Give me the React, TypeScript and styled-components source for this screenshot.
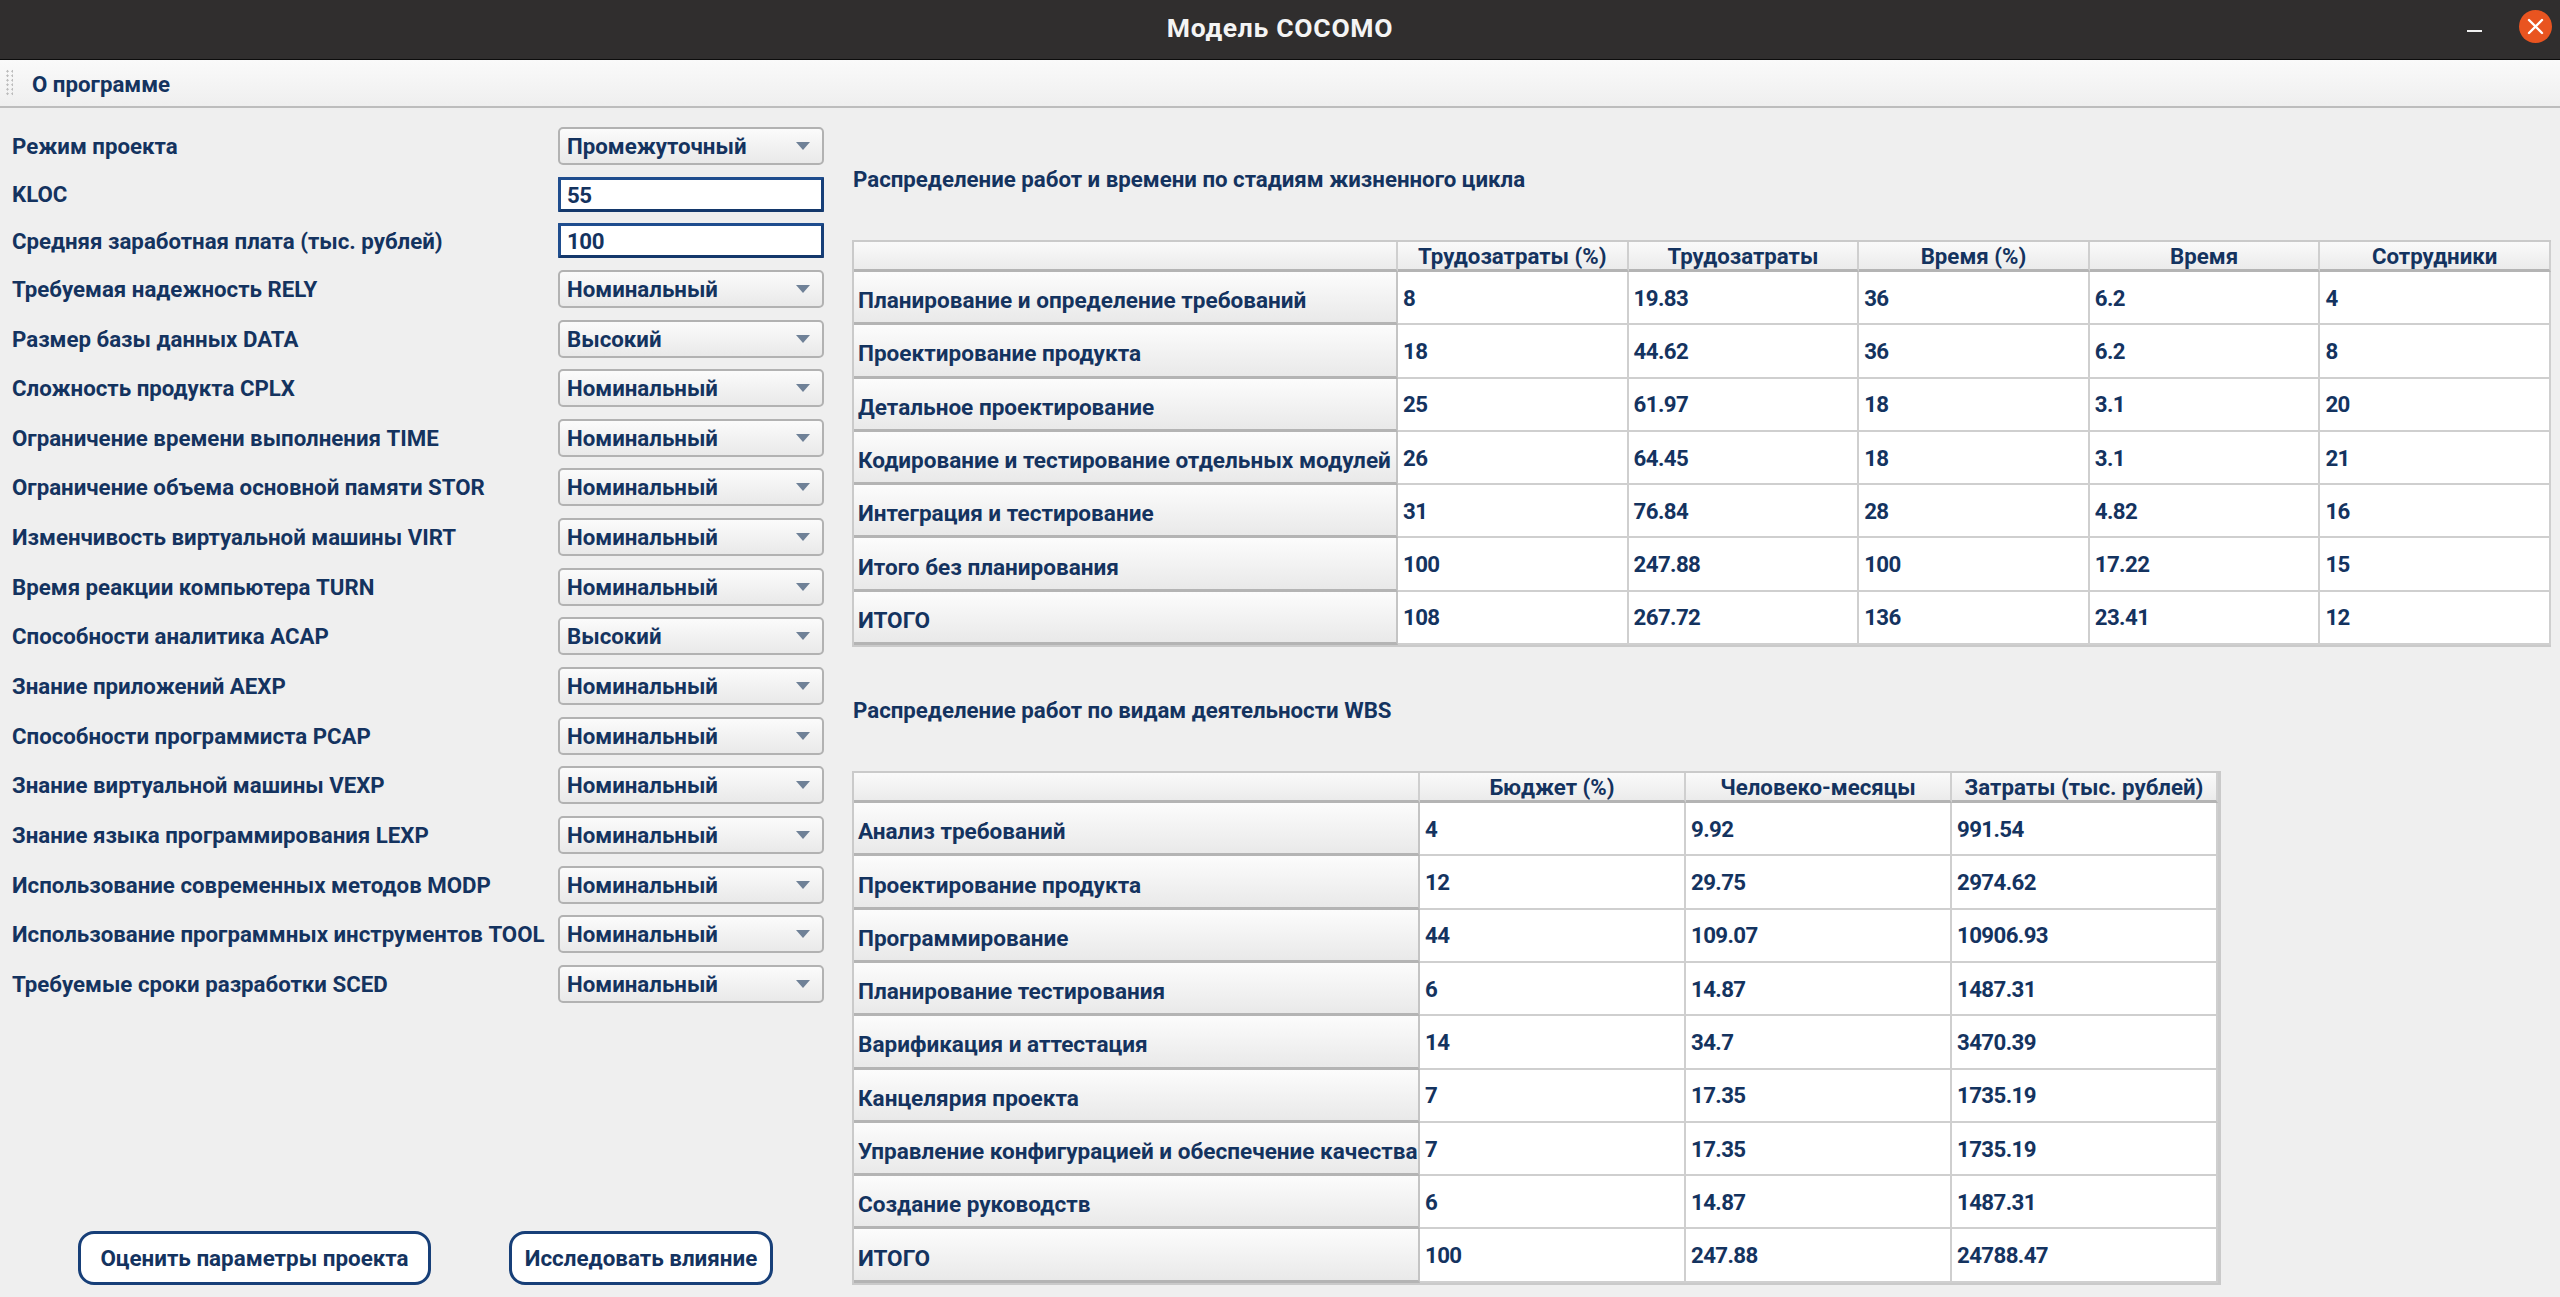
import React from 'react';
import styled, { createGlobalStyle } from 'styled-components';

const Global = createGlobalStyle`
  html, body { margin: 0; padding: 0; width: 2560px; height: 1297px; overflow: hidden; background: #efefef; }
  * { box-sizing: border-box; }
  body { font-family: "Roboto", "Noto Sans", "Liberation Sans", sans-serif; font-weight: 700; font-size: 22.25px; color: #14335f; }
`;

const Window = styled.div`
  width: 2560px; height: 1297px; display: flex; flex-direction: column; background: #efefef;
`;
const TitleBar = styled.header`
  height: 60px; flex: none; background: #302e2e; border-bottom: 1px solid #0c0c0c;
  display: flex; align-items: center; justify-content: center; position: relative;
  color: #f4f4f4; font-size: 26.5px; letter-spacing: 0.7px; padding-bottom: 4px;
`;
const WindowControls = styled.div`
  position: absolute; right: 8px; top: 10px; display: flex; align-items: center; gap: 37px;
`;
const MenuBar = styled.nav`
  height: 48px; flex: none; display: flex; align-items: center; gap: 19px; padding: 2px 0 0 5px;
  background: linear-gradient(#fafafa, #efefef); border-bottom: 2px solid #bdbdbd;
`;
const Grip = styled.span`
  width: 8px; height: 28px; margin-top: -2px;
  background-image: radial-gradient(#bcbcbc 1px, transparent 1.2px);
  background-size: 5px 4.5px;
`;
const Main = styled.main`
  flex: 1; display: flex; min-height: 0;
`;
const LeftPanel = styled.section`
  width: 852px; flex: none; display: flex; flex-direction: column; padding: 19px 28px 12px 12px;
`;
const Form = styled.div`
  display: flex; flex-direction: column; gap: 11.65px;
`;
const Row = styled.label`
  display: flex; align-items: center; justify-content: space-between;
`;
const Combo = styled.div`
  width: 266px; height: 38px; display: flex; align-items: center; justify-content: space-between;
  padding: 0 12px 0 7px; border: 2px solid #b2b2b2; border-radius: 5px;
  background: linear-gradient(#fbfbfb, #e9e9e9);
`;
const TextInput = styled.div`
  width: 266px; height: 35px; display: flex; align-items: center; padding: 1px 0 0 6px;
  background: #fff; border: 3px solid; border-color: #1f4d8e #173f78 #14386b #1f4d8e; border-radius: 1px; letter-spacing: -0.4px;
`;
const Actions = styled.div`
  margin-top: auto; display: flex; padding-left: 66px; gap: 78px;
`;
const ActionButton = styled.button<{ $w: number }>`
  width: ${p => p.$w}px; height: 54px; background: #fff; border: 3px solid #173f78; border-radius: 16px;
  font: inherit; font-size: 22.4px; color: inherit; padding: 0;
`;
const RightPanel = styled.section`
  flex: 1; min-width: 0; display: flex; flex-direction: column;
`;
const SectionTitle = styled.h2<{ $h: number; $top: number }>`
  margin: 0; font: inherit; height: ${p => p.$h}px; display: flex; align-items: center;
  padding: ${p => p.$top}px 0 0 1px;
`;
const Table = styled.div<{ $cols: string; $w: number }>`
  display: grid; grid-template-columns: ${p => p.$cols}; grid-template-rows: 30px; grid-auto-rows: 53.3px;
  width: ${p => p.$w}px; border: 2px solid #cacaca; border-right-width: 3px; background: #fff;
`;
const HeadCell = styled.div`
  display: flex; align-items: center; justify-content: center; background: linear-gradient(#fafafa, #ebebeb);
  border-right: 2px solid #cfcfcf; border-bottom: 3px solid #b4b4b4;
`;
const RowHead = styled.div`
  display: flex; align-items: center; padding: 7px 0 0 4px; white-space: nowrap; font-size: 22.55px;
  background: linear-gradient(#fcfcfc, #e9e9e9); border-bottom: 3px solid #b4b4b4; border-right: 2px solid #c4c4c4;
`;
const Cell = styled.div`
  display: flex; align-items: center; padding: 0 0 0 5px; background: #fff; letter-spacing: -0.6px;
  border-right: 2px solid #cfcfcf; border-bottom: 2px solid #cfcfcf;
`;

const Arrow = () => (
  <svg width="14" height="8" viewBox="0 0 14 8"><path d="M0 0h14L7 8z" fill="#6f8197" /></svg>
);

const Close = () => (
  <svg width="33" height="33" viewBox="0 0 33 33">
    <circle cx="16.5" cy="16.5" r="16.5" fill="#e95420" />
    <path d="M10 10l13 13M23 10L10 23" stroke="#fff" strokeWidth="2.4" strokeLinecap="round" />
  </svg>
);
const Minimize = () => (
  <svg width="15" height="4" viewBox="0 0 15 4" style={{ marginTop: 8 }}><rect y="1" width="15" height="2" fill="#f0f0f0" /></svg>
);

type F = { label: string; value: string; input?: boolean };
const fields: F[] = [
  { label: 'Режим проекта', value: 'Промежуточный' },
  { label: 'KLOC', value: '55', input: true },
  { label: 'Средняя заработная плата (тыс. рублей)', value: '100', input: true },
  { label: 'Требуемая надежность RELY', value: 'Номинальный' },
  { label: 'Размер базы данных DATA', value: 'Высокий' },
  { label: 'Сложность продукта CPLX', value: 'Номинальный' },
  { label: 'Ограничение времени выполнения TIME', value: 'Номинальный' },
  { label: 'Ограничение объема основной памяти STOR', value: 'Номинальный' },
  { label: 'Изменчивость виртуальной машины VIRT', value: 'Номинальный' },
  { label: 'Время реакции компьютера TURN', value: 'Номинальный' },
  { label: 'Способности аналитика ACAP', value: 'Высокий' },
  { label: 'Знание приложений AEXP', value: 'Номинальный' },
  { label: 'Способности программиста PCAP', value: 'Номинальный' },
  { label: 'Знание виртуальной машины VEXP', value: 'Номинальный' },
  { label: 'Знание языка программирования LEXP', value: 'Номинальный' },
  { label: 'Использование современных методов MODP', value: 'Номинальный' },
  { label: 'Использование программных инструментов TOOL', value: 'Номинальный' },
  { label: 'Требуемые сроки разработки SCED', value: 'Номинальный' },
];

const stageHead = ['', 'Трудозатраты (%)', 'Трудозатраты', 'Время (%)', 'Время', 'Сотрудники'];
const stages: string[][] = [
  ['Планирование и определение требований', '8', '19.83', '36', '6.2', '4'],
  ['Проектирование продукта', '18', '44.62', '36', '6.2', '8'],
  ['Детальное проектирование', '25', '61.97', '18', '3.1', '20'],
  ['Кодирование и тестирование отдельных модулей', '26', '64.45', '18', '3.1', '21'],
  ['Интеграция и тестирование', '31', '76.84', '28', '4.82', '16'],
  ['Итого без планирования', '100', '247.88', '100', '17.22', '15'],
  ['ИТОГО', '108', '267.72', '136', '23.41', '12'],
];
const wbsHead = ['', 'Бюджет (%)', 'Человеко-месяцы', 'Затраты (тыс. рублей)'];
const wbs: string[][] = [
  ['Анализ требований', '4', '9.92', '991.54'],
  ['Проектирование продукта', '12', '29.75', '2974.62'],
  ['Программирование', '44', '109.07', '10906.93'],
  ['Планирование тестирования', '6', '14.87', '1487.31'],
  ['Варификация и аттестация', '14', '34.7', '3470.39'],
  ['Канцелярия проекта', '7', '17.35', '1735.19'],
  ['Управление конфигурацией и обеспечение качества', '7', '17.35', '1735.19'],
  ['Создание руководств', '6', '14.87', '1487.31'],
  ['ИТОГО', '100', '247.88', '24788.47'],
];

const DataTable = ({ head, rows, cols, w }: { head: string[]; rows: string[][]; cols: string; w: number }) => (
  <Table $cols={cols} $w={w}>
    {head.map((h, i) => <HeadCell key={i}>{h}</HeadCell>)}
    {rows.map(r => r.map((v, i) => (i === 0 ? <RowHead key={i}>{v}</RowHead> : <Cell key={i}>{v}</Cell>)))}
  </Table>
);

export default function App() {
  return (
    <Window>
      <Global />
      <TitleBar>
        Модель COCOMO
        <WindowControls><Minimize /><Close /></WindowControls>
      </TitleBar>
      <MenuBar><Grip />О программе</MenuBar>
      <Main>
        <LeftPanel>
          <Form>
            {fields.map(f => (
              <Row key={f.label}>
                {f.label}
                {f.input ? <TextInput>{f.value}</TextInput> : <Combo>{f.value}<Arrow /></Combo>}
              </Row>
            ))}
          </Form>
          <Actions>
            <ActionButton $w={353}>Оценить параметры проекта</ActionButton>
            <ActionButton $w={264}>Исследовать влияние</ActionButton>
          </Actions>
        </LeftPanel>
        <RightPanel>
          <SectionTitle $h={132} $top={10}>Распределение работ и времени по стадиям жизненного цикла</SectionTitle>
          <DataTable head={stageHead} rows={stages} cols="544px repeat(5, 230.6px)" w={1699} />
          <SectionTitle $h={124} $top={2}>Распределение работ по видам деятельности WBS</SectionTitle>
          <DataTable head={wbsHead} rows={wbs} cols="566px repeat(3, 266px)" w={1369} />
        </RightPanel>
      </Main>
    </Window>
  );
}
